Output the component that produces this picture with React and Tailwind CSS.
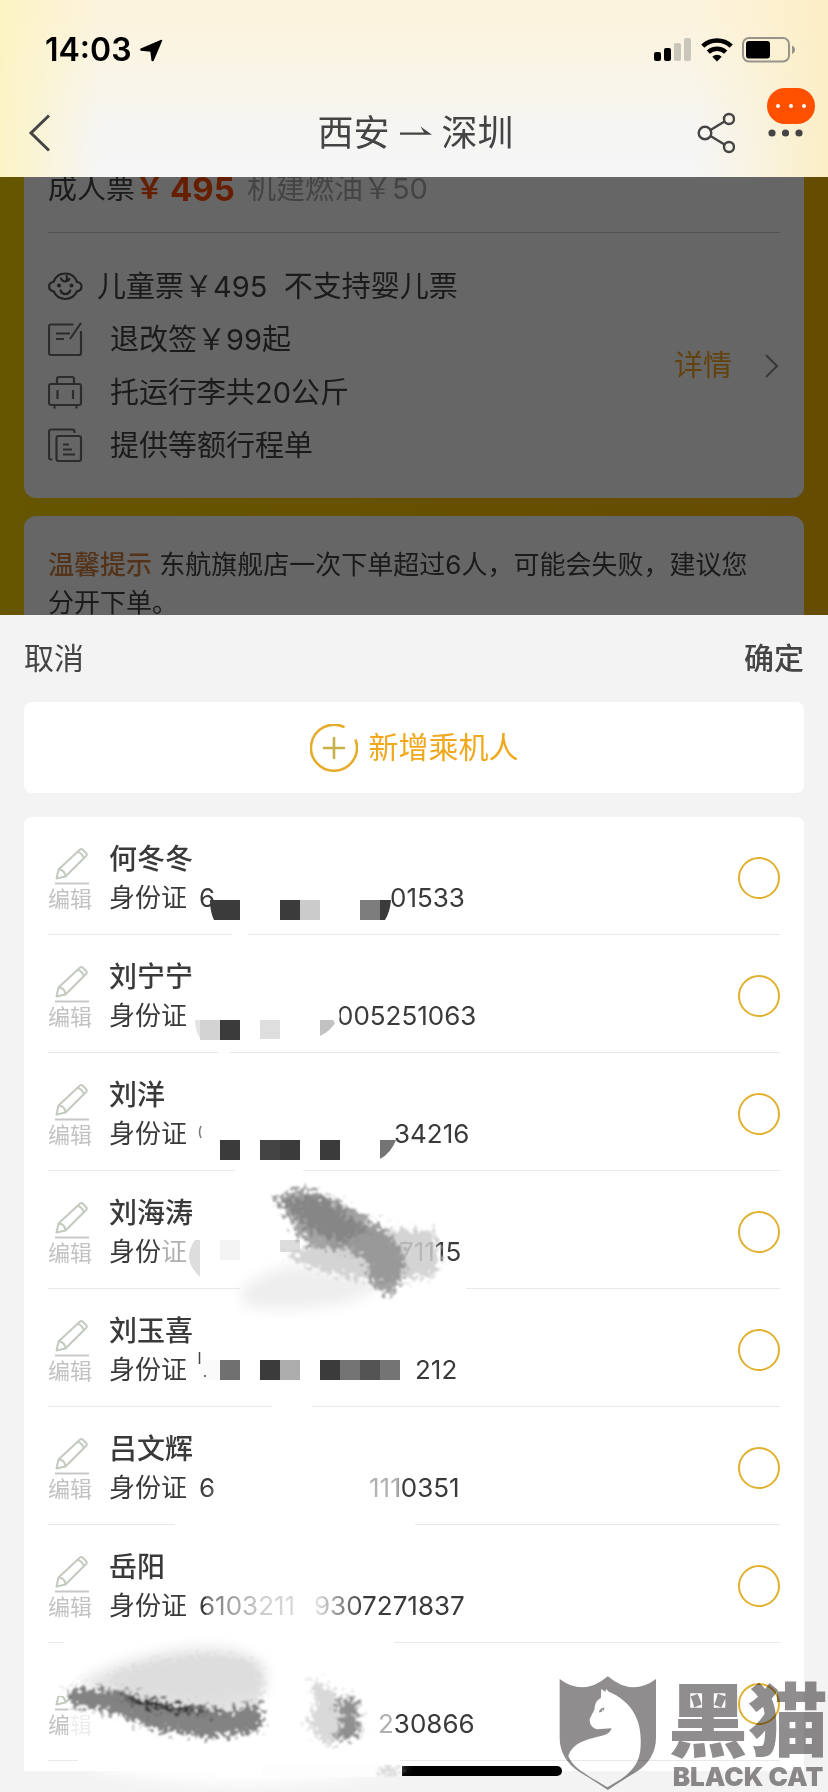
import React, { useState } from 'react';

const PASSENGERS = [
  { name: '何冬冬', head: '6', gap: 'w-[191px]', tail: '01533' },
  { name: '刘宁宁', head: '', gap: 'w-[138px]', tail: '005251063' },
  { name: '刘洋', head: '', gap: 'w-[195px]', tail: '34216' },
  { name: '刘海涛', head: '', gap: 'w-[200px]', tail: '71115' },
  { name: '刘玉喜', head: '', gap: 'w-[216px]', tail: '212' },
  { name: '吕文辉', head: '6', gap: 'w-[170px]', tail: '1110351' },
  { name: '岳阳', head: '6103211', gap: 'w-[115px]', tail: '9307271837' },
  { name: '', head: '', gap: 'w-[179px]', tail: '230866' },
];

const STAMP_FILL = '#8f8d8e';

function StatusBar() {
  return (
    <div className="flex h-[88px] items-center justify-between pt-3 pl-[45px] pr-8">
      <div className="flex items-center gap-2 text-black">
        <span className="text-[32px] leading-10 font-semibold">14:03</span>
        <svg width="23" height="23" viewBox="0 0 23 23" fill="currentColor" stroke="currentColor" strokeLinejoin="round">
          <path d="M21.500 1.500 13 21.500h-.8L11 12 1 11v-.8z" strokeWidth="1.500" />
        </svg>
      </div>
      <div className="flex items-center gap-[9px]">
        <svg width="38" height="24" viewBox="0 0 38 24">
          <rect x="0" y="14" width="7" height="9" rx="2" />
          <rect x="10" y="10" width="7" height="13" rx="2" />
          <rect x="20" y="5" width="7" height="18" rx="2" fill="#c9c7bb" />
          <rect x="30" y="0" width="7" height="23" rx="2" fill="#c9c7bb" />
        </svg>
        <svg width="32" height="24" viewBox="0 0 32 24" fill="none" stroke="#000" strokeWidth="4.600">
          <path d="M1.800 8.200a20.500 20.500 0 0 1 28.400 0" />
          <path d="M7.300 14.200a12.600 12.600 0 0 1 17.400 0" />
          <path d="M16 23.500l-4.700-4.800a6.800 6.800 0 0 1 9.400 0z" fill="#000" stroke="none" />
        </svg>
        <svg width="54" height="26" viewBox="0 0 54 26">
          <rect x="1" y="1" width="46" height="23.500" rx="6" fill="none" stroke="#96948b" strokeWidth="2" />
          <rect x="4" y="4" width="24" height="17.500" rx="3" />
          <path d="M50 8.500c2 .8 3 2.200 3 4.200s-1 3.400-3 4.200z" fill="#96948b" />
        </svg>
      </div>
    </div>
  );
}

function NavBar() {
  return (
    <div className="grid h-[89px] grid-cols-[1fr_auto_1fr] items-center pl-7 pr-[25px] text-[#444]">
      <button type="button" aria-label="返回" className="justify-self-start">
        <svg width="24" height="38" viewBox="0 0 24 38" fill="none" stroke="currentColor" strokeWidth="3">
          <path d="M21 1.500 3 19l18 17.500" />
        </svg>
      </button>
      <h1 className="flex items-center gap-[10px] text-[36px] leading-[50px] font-normal">
        西安
        <svg width="32" height="16" viewBox="0 0 32 16" fill="currentColor">
          <path d="M0 7.500h24L20.500 1.500 32 9.700H0z" />
        </svg>
        深圳
      </h1>
      <div className="flex items-center gap-8 justify-self-end">
        <button type="button" aria-label="分享">
          <svg width="38" height="42" viewBox="0 0 38 42" fill="none" stroke="currentColor" strokeWidth="2.400">
            <circle cx="8" cy="21" r="6.300" />
            <circle cx="32" cy="7" r="5" />
            <circle cx="32" cy="35" r="5" />
            <path d="M13.500 18 27.500 9.500M13.500 24l14 8.500" />
          </svg>
        </button>
        <button type="button" aria-label="更多" className="relative">
          <svg width="36" height="12" viewBox="0 0 36 12" fill="currentColor">
            <circle cx="5" cy="6" r="3.600" />
            <circle cx="18.500" cy="6" r="3.600" />
            <circle cx="32" cy="6" r="3.600" />
          </svg>
          <span className="absolute -top-[39px] left-0 flex h-9 w-12 items-center justify-center gap-[9px] rounded-full bg-[#ff5000]">
            <i className="size-1 rounded-full bg-white" />
            <i className="size-1 rounded-full bg-white" />
            <i className="size-1 rounded-full bg-white" />
          </span>
        </button>
      </div>
    </div>
  );
}

const ticketIcon = 'w-[35px] h-[35px] shrink-0';

function BabyIcon() {
  return (
    <svg className={ticketIcon} viewBox="0 0 35 35" fill="none" stroke="#555" strokeWidth="2.200" strokeLinecap="round">
      <path d="M5.500 13C7.500 7.500 12 4.500 17.300 4.500S27 7.500 29 13c3 .3 4.500 2 4.500 4.600s-1.800 4.400-4.500 4.700c-2.200 4.800-6.500 7.700-11.700 7.700S7.800 27.100 5.600 22.300C2.900 22 1.100 20.200 1.100 17.600S2.500 13.300 5.500 13z" />
      <path d="M13 9.500c1.500 3 4 3.500 4.800 2.500 1.500-1.200 2-2.800.7-5M18 12c2 .3 3-.5 3.500-2" />
      <path d="M12.500 21.500c1 2.600 2.800 3.600 4.900 3.600s3.900-1 4.900-3.600" />
      <circle cx="11" cy="16.500" r="1" fill="#555" />
      <circle cx="23.500" cy="16.500" r="1" fill="#555" />
    </svg>
  );
}

function ChangeIcon() {
  return (
    <svg className={ticketIcon} viewBox="0 0 35 35" fill="none" stroke="#6f6f6f" strokeWidth="2.200">
      <path d="M25.500 2.500H3a2 2 0 0 0-2 2V31a2 2 0 0 0 2 2h28a2 2 0 0 0 2-2V9" />
      <path d="M33 1 22 17M8 11.500h14M8 17h8" />
    </svg>
  );
}

function LuggageIcon() {
  return (
    <svg className={ticketIcon} viewBox="0 0 35 35" fill="none" stroke="#6f6f6f" strokeWidth="2.200">
      <rect x="1" y="9" width="32" height="21" rx="2" />
      <path d="M9 9V4a2 2 0 0 1 2-2h13a2 2 0 0 1 2 2v5M9.500 15v9M25 15v9M6.500 30v3.500M28.500 30v3.500" />
    </svg>
  );
}

function ReceiptIcon() {
  return (
    <svg className={ticketIcon} viewBox="0 0 35 35" fill="none" stroke="#6f6f6f" strokeWidth="2.200">
      <rect x="8.500" y="8" width="24.500" height="25" rx="2" />
      <path d="M4.500 31.500H3a2 2 0 0 1-2-2V3.500a2 2 0 0 1 2-2h21.500a2 2 0 0 1 2 2V5M15 16.500h6M15 21.500h9M15 26.500h12" />
    </svg>
  );
}

function TicketPage() {
  return (
    <section className="relative h-[438px] overflow-hidden bg-linear-to-r from-[#ffd600] to-[#ffbe00] px-6 text-[#444]">
      <div className="rounded-b-xl bg-white px-6 pb-[26px]">
        <p className="flex items-center text-[29px] leading-6">
          成人票
          <span className="font-bold text-[#ff4d00]">￥</span>
          <strong className="mr-3 ml-1.5 text-[33px] font-bold text-[#ff4d00]">495</strong>
          <span className="text-[#aaa]">机建燃油￥50</span>
        </p>
        <div className="mt-[31px] flex items-center justify-between border-t border-[#ccc] pt-[27px]">
          <ul className="text-[29px] leading-[53px]">
            <li className="flex items-center gap-[14px]">
              <BabyIcon />
              <span>儿童票￥495&nbsp; 不支持婴儿票</span>
            </li>
            <li className="flex items-center gap-[27px]">
              <ChangeIcon />
              <span>退改签￥99起</span>
            </li>
            <li className="flex items-center gap-[27px]">
              <LuggageIcon />
              <span>托运行李共20公斤</span>
            </li>
            <li className="flex items-center gap-[27px]">
              <ReceiptIcon />
              <span>提供等额行程单</span>
            </li>
          </ul>
          <a href="#detail" className="flex items-center gap-8 text-[29px] text-[#f5a623]">
            详情
            <svg width="16" height="26" viewBox="0 0 16 26" fill="none" stroke="#909090" strokeWidth="2.200">
              <path d="M2 2l11 11L2 24" />
            </svg>
          </a>
        </div>
      </div>
      <div className="mt-[18px] h-32 rounded-t-xl bg-white pt-[30px] pl-6 pr-10">
        <p className="text-[26px] leading-[38px]">
          <b className="font-medium text-[#d08040]">温馨提示</b> 东航旗舰店一次下单超过6人，可能会失败，建议您分开下单。
        </p>
      </div>
      <div className="absolute inset-0 bg-black/60" />
    </section>
  );
}

function PencilIcon() {
  return (
    <svg width="36" height="38" viewBox="0 0 36 38" fill="none" stroke="#c4cac0" strokeWidth="2" strokeLinejoin="round">
      <path d="M2.500 31.500 4.500 22.500 26 2.500q1.500-1 2.800.2l3.500 3.500q1.200 1.300 0 2.600L11.500 29.500z" />
      <path d="M4.500 22.500c4 0 6.500 3 7 7M23.500 5c3 .5 5.500 3.500 6.500 6.500" />
      <path d="M1 36.500h34" stroke="#c8c8c8" />
    </svg>
  );
}

function PassengerRow({ passenger, checked, onToggle, last }) {
  const label = passenger.name || '乘机人';
  return (
    <li className="flex h-[118px] items-center border-b border-[#e9e9e9] pt-1">
      <button type="button" className="flex w-[61px] shrink-0 flex-col items-start pt-1">
        <span className="pl-[6px]"><PencilIcon /></span>
        <span className="text-[22px] leading-7 text-[#c2c2c2]">编辑</span>
      </button>
      <div className="flex-1 text-[#3a3a3a]">
        <p className="h-10 text-[28px] leading-10 font-medium">{passenger.name}</p>
        <p className="flex text-[26px] leading-[38px]">
          <span className="w-[90px]">{last ? '' : '身份证'}</span>
          <span className={`${passenger.gap} shrink-0`}>{passenger.head}</span>
          <span>{passenger.tail}</span>
        </p>
      </div>
      <input
        type="checkbox"
        aria-label={label}
        checked={checked}
        onChange={onToggle}
        className="size-[42px] shrink-0 appearance-none rounded-full border-2 border-[#e0b02e] checked:bg-[#e0b02e]"
      />
    </li>
  );
}

// x, y, width, height, fill
const BLOCKS = [
  [280, 900, 20, 20, '#3b3b3b'],
  [300, 900, 20, 20, '#cbcbcb'],
  [360, 900, 20, 20, '#7d7d7d'],
  [200, 1020, 20, 20, '#d3d3d3'],
  [220, 1020, 20, 20, '#3b3b3b'],
  [260, 1020, 20, 19, '#dedede'],
  [220, 1140, 20, 20, '#3b3b3b'],
  [260, 1140, 20, 20, '#444'],
  [280, 1140, 20, 20, '#3b3b3b'],
  [320, 1140, 20, 20, '#3b3b3b'],
  [220, 1240, 20, 20, '#f4f4f4'],
  [280, 1240, 20, 12, '#ddd'],
  [200, 1360, 20, 20, '#fafafa'],
  [220, 1360, 20, 20, '#707070'],
  [260, 1360, 20, 20, '#3b3b3b'],
  [280, 1360, 20, 20, '#adadad'],
  [320, 1360, 20, 20, '#3b3b3b'],
  [340, 1360, 20, 20, '#747474'],
  [360, 1360, 20, 20, '#545454'],
  [380, 1360, 20, 20, '#747474'],
];

function Smudges() {
  return (
    <svg className="pointer-events-none absolute top-0 left-0 h-[975px] w-[780px]" viewBox="24 817 780 975">
      <defs>
        <filter id="rough" x="-20%" y="-20%" width="140%" height="140%">
          <feTurbulence type="fractalNoise" baseFrequency="0.22" numOctaves="4" seed="4" result="n" />
          <feDisplacementMap in="SourceGraphic" in2="n" scale="26" xChannelSelector="R" yChannelSelector="G" result="d" />
          <feGaussianBlur in="d" stdDeviation="1.200" />
        </filter>
        <filter id="soft" x="-20%" y="-30%" width="140%" height="160%">
          <feGaussianBlur stdDeviation="7" />
        </filter>
        <linearGradient id="wipe" x1="0" x2="1">
          <stop offset="0" stopColor="#fff" stopOpacity="0.300" />
          <stop offset="0.350" stopColor="#fff" stopOpacity="0.750" />
          <stop offset="0.700" stopColor="#fff" stopOpacity="0.850" />
          <stop offset="1" stopColor="#fff" stopOpacity="0" />
        </linearGradient>
      </defs>

      {/* wiped parts of the separators */}
      <g fill="#fff">
        <rect x="232" y="931" width="16" height="6" />
        <rect x="218" y="1049" width="12" height="6" />
        <rect x="235" y="1167" width="68" height="6" />
        <rect x="240" y="1285" width="226" height="6" />
        <rect x="272" y="1403" width="40" height="6" />
        <rect x="175" y="1521" width="240" height="6" />
        <rect x="64" y="1639" width="330" height="6" />
        <rect x="78" y="1757" width="322" height="6" />
      </g>

      {BLOCKS.map(([x, y, w, h, fill]) => (
        <rect key={`${x}-${y}`} x={x} y={y} width={w} height={h} fill={fill} />
      ))}
      <path d="M210 900h30v20h-26q-4-8-4-20z" fill="#3b3b3b" />
      <path d="M380 900h11q-1 12-6 20h-5z" fill="#3b3b3b" />
      <path d="M195 1020h5v18q-5-8-5-18z" fill="#e4e4e4" />
      <path d="M320 1020h17q-6 11-17 16z" fill="#c2c2c2" />
      <path d="M380 1140h16q-5 13-16 19z" fill="#747474" />
      <path d="M200 1240v37q-19-18-5-37z" fill="#ddd" />
      <path d="M201 1126q-3 6 0 12" fill="none" stroke="#777" strokeWidth="1.500" />
      <path d="M199.500 1352v12M204 1376h2" stroke="#444" strokeWidth="1.500" />
      <path d="M336 1005q7 10 1 22l-5-9z" fill="#fff" />

      {/* 4th passenger */}
      <rect x="162" y="1232" width="26" height="34" fill="#fff" opacity="0.600" />
      <path d="M240 1290q30-24 60-24l90 16-40 20q-60 12-105 4z" fill="#eee" filter="url(#soft)" />
      <g filter="url(#rough)">
        <path d="M286 1256l90-28 58 2q10 30 0 46l-52 6q-60-6-96-26z" fill="#ccc" opacity="0.850" />
        <path d="M274 1196l28-8 30 8 46 28 24 24 4 22-12 26-20-8-8-28-20-10-40-4z" fill="#858585" opacity="0.750" />
        <path d="M280 1200l40-4 50 34-30 12-30-12z" fill="#666" opacity="0.500" />
      </g>

      {/* 6th and 7th passenger */}
      <ellipse cx="290" cy="1500" rx="76" ry="22" fill="#fff" filter="url(#soft)" />
      <rect x="360" y="1468" width="38" height="44" fill="#fff" opacity="0.600" />
      <rect x="206" y="1588" width="158" height="34" fill="url(#wipe)" />

      {/* 8th passenger */}
      <rect x="44" y="1650" width="48" height="46" fill="#fff" opacity="0.900" />
      <path d="M68 1704h24v32H68z" fill="#fff" opacity="0.700" />
      <path d="M80 1682q60-32 130-34 40 2 56 20l-2 24-60 12-110-12z" fill="#e2e2e2" filter="url(#soft)" />
      <g filter="url(#rough)">
        <path d="M110 1676q60-24 110-20 40 2 42 20l0 30-60 4-80-18z" fill="#dcdcdc" opacity="0.800" />
        <path d="M66 1688l50 2 60 14 50 6 34-6 2 26-48 8-60-8-36-16-46-8z" fill="#6c6c6c" opacity="0.850" />
        <path d="M116 1696l34 5 60 12 40-4-40 5-60-5z" fill="#222" opacity="0.800" />
        <path d="M312 1676l20 16 26 6 6 36-36 12-22-22 10-20z" fill="#d2d2d2" opacity="0.850" />
        <path d="M334 1698l22 4 4 34-26 6 8-20z" fill="#707070" opacity="0.700" />
      </g>
      <rect x="374" y="1706" width="20" height="32" fill="#fff" opacity="0.600" />
      <path d="M90 1768q160 34 312-2l-6-12H120z" fill="#fff" filter="url(#soft)" />
      <path d="M262 1764h140v13H262z" fill="#fdfdfd" />
      <path d="M378 1768l24-2v10h-22z" fill="#ddd" filter="url(#rough)" />
    </svg>
  );
}

function BlackCatStamp() {
  return (
    <div className="pointer-events-none absolute right-0 bottom-0 flex items-end gap-2 mix-blend-multiply">
      <svg width="103" height="118" viewBox="170 165 310 355" fill={STAMP_FILL} fillRule="evenodd">
        <path d="M178 180q72 54 145-8 73 62 145 8v175q0 66-60 105-50 30-85 54-35-24-85-54-60-39-60-105zM303 210l-1 27c-14 8-18 16-19 34l-15 30c1 18 8 26 23 30l43-3c-4 18-24 22-50 28-48 12-70 26-80 56 14 34 46 52 118 94 30-18 50-30 58-38 40-36 42-66 42-104 0-70-34-120-96-146l-8-8-2 8z" />
        <path d="M296 281q2-13 17-15-1 14-17 15zm8-4q5-2 5-7-5 2-5 7z" />
      </svg>
      <div className="flex flex-col items-center font-black text-[#8f8d8e]">
        <span className="text-[80px] leading-[80px]">黑猫</span>
        <span className="text-[26px] leading-[31px] whitespace-nowrap">BLACK CAT</span>
      </div>
    </div>
  );
}

function PassengerSheet() {
  const [selected, setSelected] = useState([]);

  const toggle = (index) => {
    setSelected(prev => (prev.includes(index) ? prev.filter(i => i !== index) : [...prev, index]));
  };

  return (
    <section className="relative bg-[#f3f3f3] px-6 pb-[21px]">
      <header className="flex h-[87px] items-center justify-between text-[30px] text-[#444]">
        <button type="button">取消</button>
        <button type="button" className="font-medium">确定</button>
      </header>
      <button type="button" className="flex h-[91px] w-full items-center justify-center gap-[11px] rounded-lg bg-white text-[30px] text-[#f0a81c]">
        <svg width="48" height="48" viewBox="0 0 48 48" fill="none" stroke="#e6ac2c" strokeWidth="2.600" strokeLinecap="round">
          <path d="M33.500 2.800A23 23 0 1 0 45.800 16.500" />
          <path d="M24 14v20M14 24h20" stroke="#c8b048" />
        </svg>
        新增乘机人
      </button>
      <div className="mt-6 rounded-t-lg bg-white px-6 pb-[10px]">
        <ul>
          {PASSENGERS.map((passenger, index) => (
            <PassengerRow
              key={index}
              passenger={passenger}
              checked={selected.includes(index)}
              onToggle={() => toggle(index)}
              last={index === PASSENGERS.length - 1}
            />
          ))}
        </ul>
      </div>
      <div className="absolute bottom-4 left-1/2 h-[10px] w-[296px] -translate-x-1/2 rounded-full bg-black" />
      <div className="absolute inset-x-6 top-[202px]">
        <Smudges />
      </div>
      <BlackCatStamp />
    </section>
  );
}

export default function App() {
  return (
    <div className="min-h-screen overflow-hidden bg-[#f3f3f3] font-[Inter,'Noto_Sans_CJK_SC',sans-serif]">
      <header className="bg-[linear-gradient(to_right,#fcf3c4,transparent_12%,transparent_84%,#fcefc6),linear-gradient(to_bottom,#fcf3dd_10%,#f8f5ea_50%,#f5f5f4_75%,#f6f6f6)]">
        <StatusBar />
        <NavBar />
      </header>
      <TicketPage />
      <PassengerSheet />
    </div>
  );
}
